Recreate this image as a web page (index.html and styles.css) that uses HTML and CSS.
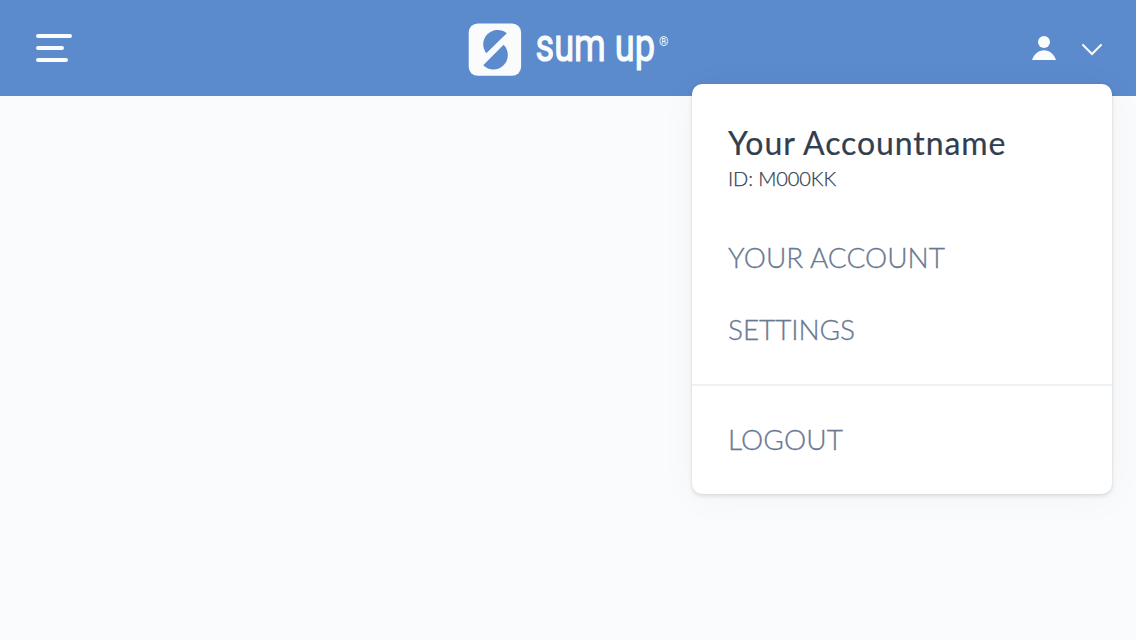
FILE: index.html
```html
<!DOCTYPE html>
<html lang="en">
<head>
<meta charset="utf-8">
<title>SumUp</title>
<link rel="stylesheet" href="styles.css">
</head>
<body>
<header class="topbar">
  <button class="icon-button" aria-label="Menu">
    <svg width="36" height="28" viewBox="0 0 36 28" fill="none" stroke="#fafbfd" stroke-width="4" stroke-linecap="round"><path d="M2 2H34M2 14H26M2 26H30"/></svg>
  </button>
  <svg class="logo" width="204" height="60" viewBox="0 0 204 60" role="img" aria-label="sumup">
    <rect x="0.7" y="3.4" width="52.4" height="52.4" rx="9" fill="#fafbfd"/>
    <path class="logo-cut" d="M38.8 13.2A14.4 14.4 0 0 0 18.3 33.2Z"/>
    <path class="logo-cut" d="M15.2 45.2A14.2 14.2 0 0 0 35.6 24.8Z"/>
    <text class="wordmark" x="67.500" y="41.3" textLength="119.5" lengthAdjust="spacingAndGlyphs">sum up</text>
    <text class="registered" x="191" y="25.6">®</text>
  </svg>
  <button class="account-button" aria-label="Account">
    <svg width="24" height="24" viewBox="0 0 24 24" fill="#fafbfd"><circle cx="12" cy="6" r="6"/><path d="M0 24C2 18 6.500 14.200 12 14.200S22 18 24 24Z"/></svg>
    <svg class="chevron" width="20" height="12" viewBox="0 0 20 12" fill="none" stroke="#fafbfd" stroke-width="2" stroke-linecap="round"><path d="M1 1L10 10L19 1"/></svg>
  </button>
</header>
<section class="menu">
  <div class="menu-main">
    <h1 class="account-name">Your Accountname</h1>
    <p class="account-id">ID: M000KK</p>
    <a class="menu-item item-account">YOUR ACCOUNT</a>
    <a class="menu-item item-settings">SETTINGS</a>
  </div>
  <div class="menu-footer"><a class="menu-item item-logout">LOGOUT</a></div>
</section>
</body>
</html>
```
FILE: styles.css
```css
* { box-sizing: border-box; }
body { margin: 0; height: 640px; overflow: hidden; background: #fafbfd; font-family: Lato, sans-serif; }
.topbar { display: grid; grid-template-columns: 1fr 204px 1fr; align-items: center; height: 96px; padding: 0 34px 0 36px; background: #5b8bcc; }
button { border: 0; padding: 0; background: none; display: flex; align-items: center; }
.icon-button { justify-self: start; }
.account-button { justify-self: end; gap: 26px; }
.chevron { margin-top: 4px; }
.logo { display: block; margin: 3px 0 0 1px; overflow: visible; }
.logo-cut { fill: #5b8bcc; }
.wordmark { font: 400 46px Roboto, sans-serif; fill: #fafbfd; stroke: #fafbfd; stroke-width: 1.2; stroke-linejoin: round; }
.registered { font: 400 12px Roboto, sans-serif; fill: #fafbfd; }
.menu { position: absolute; top: 84px; left: 692px; width: 420px; height: 410px; border-radius: 10px; background: #fff; box-shadow: 0 0 2px rgba(12,15,20,.07), 0 2px 4px rgba(12,15,20,.12), 0 4px 40px rgba(12,15,20,.035); }
.menu-main { height: 302px; padding: 39px 36px 0; border-bottom: 2px solid #eff1f6; }
.account-name { margin: 0; font-size: 32px; line-height: 40px; font-weight: 400; color: #323e4f; white-space: nowrap; letter-spacing: .9px; -webkit-text-stroke: .2px #323e4f; }
.account-id { margin: 3px 0 0; font-size: 20px; line-height: 24px; font-weight: 300; color: #323e4f; letter-spacing: -.1px; -webkit-text-stroke: .25px #323e4f; }
.menu-item { display: block; font-size: 28px; line-height: 40px; font-weight: 300; color: #687991; -webkit-text-stroke: .3px #687991; }
.item-account { margin-top: 47px; }
.item-settings { margin-top: 32px; letter-spacing: -.1px; }
.menu-footer { padding: 33px 36px 0; }
.item-logout { letter-spacing: .1px; }
```
